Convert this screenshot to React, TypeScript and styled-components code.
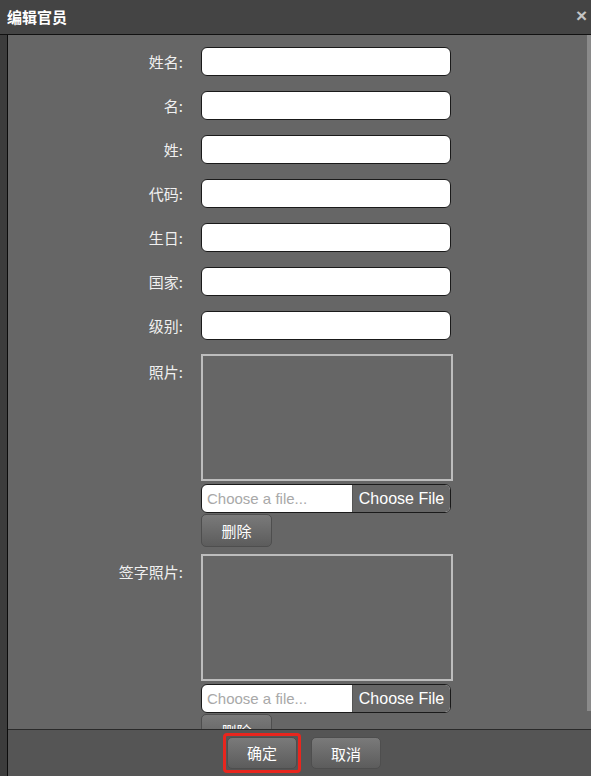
import React from "react";
import styled, { createGlobalStyle } from "styled-components";

const GlobalStyle = createGlobalStyle`
  html, body {
    margin: 0;
    padding: 0;
    background: #3c3c3c;
  }
  body {
    font-family: "Liberation Sans", "Noto Sans CJK SC", sans-serif;
  }
`;

const Dialog = styled.div`
  width: 591px;
  height: 776px;
  display: flex;
  flex-direction: column;
  background: #3c3c3c;
  overflow: hidden;
`;

const TitleBar = styled.div`
  height: 34px;
  flex: none;
  display: flex;
  align-items: center;
  justify-content: space-between;
  padding: 0 4px 0 7px;
  background: #444;
  border-bottom: 1px solid #111;
`;

const Title = styled.span`
  font-family: "Noto Sans CJK SC", sans-serif;
  font-size: 15px;
  font-weight: bold;
  color: #fff;
  margin-top: -2px;
`;

const Close = styled.span`
  font-family: "Liberation Sans", sans-serif;
  font-size: 19px;
  font-weight: bold;
  color: #c4c4c4;
  margin-top: -3px;
`;

const Body = styled.div`
  flex: 1;
  display: flex;
  flex-direction: column;
  margin-left: 7px;
  border-left: 1px solid #0c0c0c;
  min-height: 0;
`;

const ScrollArea = styled.div`
  flex: 1;
  display: flex;
  min-height: 0;
  background: #666;
  border-bottom: 1px solid #2a2a2a;
`;

const Content = styled.div`
  flex: 1;
  overflow: hidden;
  padding-top: 12px;
`;

const ScrollBar = styled.div`
  width: 4px;
  flex: none;
  background: #666;
  display: flex;
  flex-direction: column;
`;

const ScrollThumb = styled.div`
  height: 676px;
  background: #8a8a8a;
`;

const Form = styled.div`
  display: grid;
  grid-template-columns: 175px 252px;
  column-gap: 18px;
  row-gap: 15px;
`;

const Label = styled.label<{ $top?: number }>`
  justify-self: end;
  align-self: ${(p) => (p.$top !== undefined ? "start" : "center")};
  padding-top: ${(p) => p.$top ?? 0}px;
  font-family: "Noto Sans CJK SC", sans-serif;
  font-size: 15px;
  color: #f0f0f0;
  white-space: nowrap;
`;

const TextInput = styled.input`
  box-sizing: border-box;
  width: 250px;
  height: 29px;
  border: 1px solid #1a1a1a;
  border-radius: 6px;
  background: #fff;
  padding: 0 6px;
  outline: none;
`;

const PhotoField = styled.div<{ $shift: number }>`
  display: flex;
  flex-direction: column;
  align-items: flex-start;
  margin-top: ${(p) => p.$shift}px;
`;

const PhotoLabel = styled(Label)<{ $shift: number }>`
  margin-top: ${(p) => p.$shift}px;
`;

const PhotoBox = styled.div`
  box-sizing: border-box;
  width: 252px;
  height: 127px;
  border: 2px solid #bdbdbd;
  background: #666;
`;

const FileInput = styled.div`
  box-sizing: border-box;
  margin-top: 3px;
  width: 250px;
  height: 29px;
  display: flex;
  border: 1px solid #1a1a1a;
  border-radius: 6px;
  overflow: hidden;
  background: #fff;
`;

const FileName = styled.span`
  flex: 1;
  display: flex;
  align-items: center;
  padding-left: 5px;
  font-size: 15px;
  color: #a8a8a8;
`;

const FileButton = styled.span`
  width: 97px;
  display: flex;
  align-items: center;
  justify-content: center;
  background: #666;
  color: #fff;
  font-size: 16px;
  border-left: 1px solid #555;
`;

const Button = styled.button`
  box-sizing: border-box;
  width: 70px;
  height: 32px;
  border: 1px solid #4e4e4e;
  border-radius: 5px;
  background: linear-gradient(#7a7a7a, #5c5c5c);
  color: #fff;
  font-family: "Noto Sans CJK SC", sans-serif;
  font-size: 15px;
  padding: 0;
`;

const DeleteButton = styled(Button)`
  margin-top: 1px;
  width: 71px;
  height: 33px;
`;

const Footer = styled.div`
  height: 46px;
  flex: none;
  display: flex;
  align-items: center;
  justify-content: center;
  gap: 10px;
  background: #555;
  padding-left: 5px;
`;

const Highlight = styled.div`
  padding: 1px;
  border: 3px solid #e8261e;
  border-radius: 4px;
  display: flex;
  margin-top: -1px;
`;

const fields = ["姓名:", "名:", "姓:", "代码:", "生日:", "国家:", "级别:"];

const Photo: React.FC<{ label: string; shift: number }> = ({ label, shift }) => (
  <>
    <PhotoLabel $top={7} $shift={shift}>
      {label}
    </PhotoLabel>
    <PhotoField $shift={shift}>
      <PhotoBox />
      <FileInput>
        <FileName>Choose a file...</FileName>
        <FileButton>Choose File</FileButton>
      </FileInput>
      <DeleteButton>删除</DeleteButton>
    </PhotoField>
  </>
);

export default function App() {
  return (
    <Dialog>
      <GlobalStyle />
      <TitleBar>
        <Title>编辑官员</Title>
        <Close>×</Close>
      </TitleBar>
      <Body>
        <ScrollArea>
          <Content>
            <Form>
              {fields.map((f) => (
                <React.Fragment key={f}>
                  <Label>{f}</Label>
                  <TextInput />
                </React.Fragment>
              ))}
              <Photo label="照片:" shift={-1} />
              <Photo label="签字照片:" shift={-8} />
            </Form>
          </Content>
          <ScrollBar>
            <ScrollThumb />
          </ScrollBar>
        </ScrollArea>
        <Footer>
          <Highlight>
            <Button>确定</Button>
          </Highlight>
          <Button>取消</Button>
        </Footer>
      </Body>
    </Dialog>
  );
}
